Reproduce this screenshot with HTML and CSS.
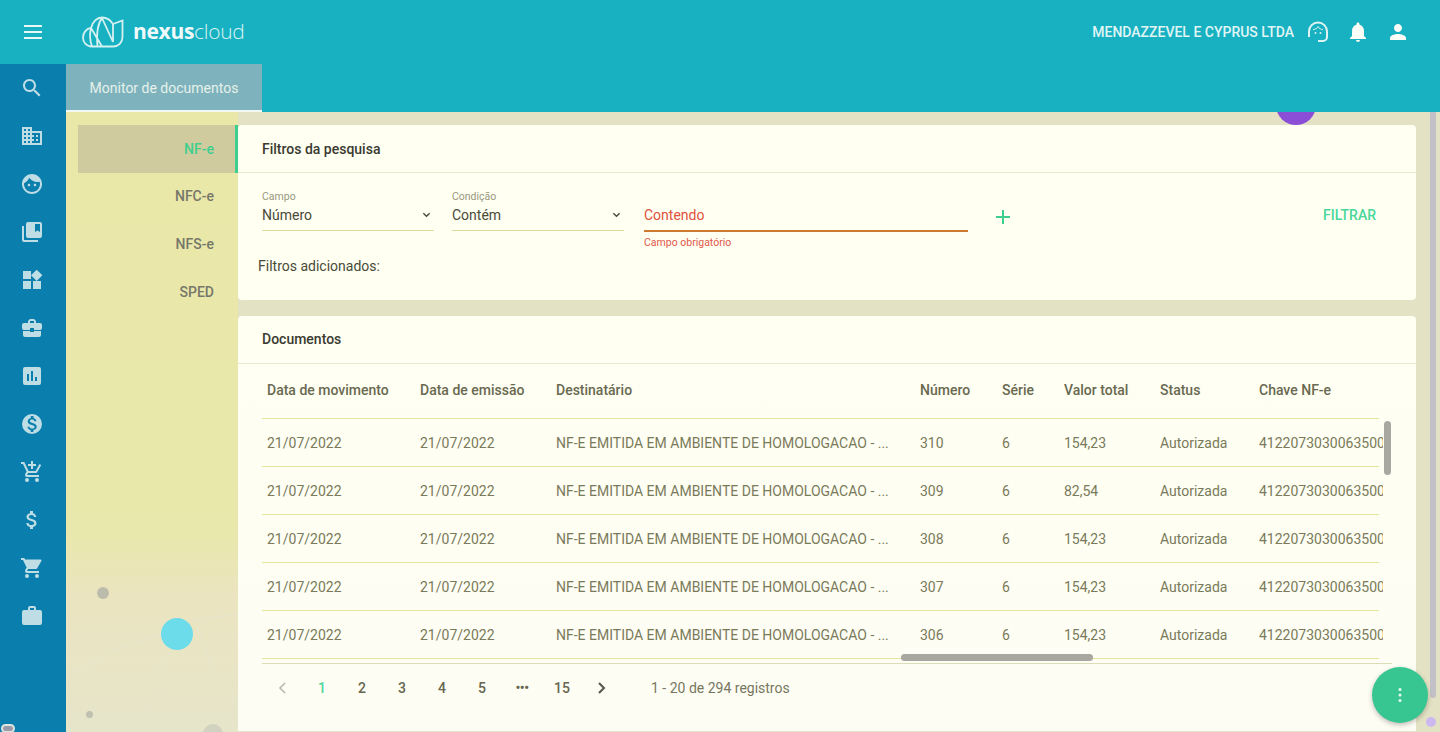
FILE: index.html
```html
<!DOCTYPE html>
<html lang="pt-BR">
<head>
<meta charset="utf-8">
<title>nexuscloud - Monitor de documentos</title>
<link rel="stylesheet" href="styles.css">
</head>
<body>
<div class="app">
  <header class="topbar">
    <button class="menu-btn" aria-label="Menu">
      <svg class="ic-menu" viewBox="0 0 18 14"><path d="M0 1h18M0 7h18M0 13h18" stroke="currentColor" stroke-width="2"/></svg>
    </button>
    <div class="logo">
      <svg class="logo-mark" viewBox="0 0 42 32" fill="none" stroke="currentColor" stroke-width="1.800"><path d="M10 30.500C4 30.500 1 26 1 21.500C1 16.500 4.500 12.500 9 12C10.500 5.500 15 1.500 20 1.500C25 1.500 28.500 4 31 8L40.500 4.500V21C40.500 26.500 36.500 30.500 31 30.500Z"/><path d="M9 12C7.500 18 8 25 10 30.500M9 12L20 30.500M20 2C15.500 8 14.500 20 15.500 30.500M20 2L31 26M31 8V26"/></svg>
      <span class="logo-text"><b>nexus</b>cloud</span>
    </div>
    <div class="top-right">
      <span class="company">MENDAZZEVEL E CYPRUS LTDA</span>
      <svg class="top-ic" viewBox="0 0 24 24" fill="none" stroke="currentColor" stroke-width="2"><path d="M3 17v-5.500a9 9 0 0 1 18 0V17a4 4 0 0 1-4 4h-5"/><circle cx="9.500" cy="13" r="1" fill="currentColor" stroke="none"/><circle cx="14.500" cy="13" r="1" fill="currentColor" stroke="none"/><path d="M7 9.500c2.500 0 4-1 5-3 1 2 3 3 5 3" stroke-width="1"/></svg>
      <svg class="top-ic bright" viewBox="0 0 24 24"><path fill="currentColor" d="M12 22c1.100 0 2-.9 2-2h-4c0 1.100.9 2 2 2zm6-6v-5c0-3.100-1.600-5.600-4.500-6.300V4c0-.8-.7-1.500-1.500-1.500s-1.500.7-1.500 1.500v.7C7.600 5.400 6 7.900 6 11v5l-2 2v1h16v-1l-2-2z"/></svg>
      <svg class="top-ic bright" viewBox="0 0 24 24"><path fill="currentColor" d="M12 12c2.200 0 4-1.800 4-4s-1.800-4-4-4-4 1.800-4 4 1.800 4 4 4zm0 2c-2.700 0-8 1.300-8 4v2h16v-2c0-2.700-5.300-4-8-4z"/></svg>
    </div>
  </header>

  <div class="body-row">
    <nav class="rail">
      <svg viewBox="0 0 24 24"><path fill="currentColor" d="M15.500 14h-.79l-.28-.27C15.410 12.590 16 11.110 16 9.500 16 5.910 13.090 3 9.500 3S3 5.910 3 9.500 5.910 16 9.500 16c1.610 0 3.090-.59 4.230-1.570l.27.28v.79l5 4.990L20.490 19l-4.990-5zm-6 0C7.010 14 5 11.990 5 9.500S7.010 5 9.500 5 14 7.010 14 9.500 11.990 14 9.500 14z"/></svg>
      <svg viewBox="0 0 24 24"><path fill="currentColor" d="M12 7V3H2v18h20V7H12zM6 19H4v-2h2v2zm0-4H4v-2h2v2zm0-4H4V9h2v2zm0-4H4V5h2v2zm4 12H8v-2h2v2zm0-4H8v-2h2v2zm0-4H8V9h2v2zm0-4H8V5h2v2zm10 12h-8v-2h2v-2h-2v-2h2v-2h-2V9h8v10zm-2-8h-2v2h2v-2zm0 4h-2v2h2v-2z"/></svg>
      <svg viewBox="0 0 24 24"><path fill="currentColor" d="M9 11.750c-.69 0-1.250.56-1.250 1.250s.56 1.250 1.250 1.250 1.250-.56 1.250-1.250-.56-1.250-1.250-1.250zm6 0c-.69 0-1.250.56-1.250 1.250s.56 1.250 1.250 1.250 1.250-.56 1.250-1.250-.56-1.250-1.250-1.250zM12 2C6.480 2 2 6.480 2 12s4.480 10 10 10 10-4.480 10-10S17.520 2 12 2zm0 18c-4.410 0-8-3.590-8-8 0-.29.02-.58.05-.86 2.360-1.050 4.230-2.980 5.210-5.370C11.070 8.330 14.050 10 17.420 10c.78 0 1.530-.09 2.250-.26.21.71.33 1.470.33 2.260 0 4.410-3.590 8-8 8z"/></svg>
      <svg viewBox="0 0 24 24"><path fill="currentColor" d="M4 6H2v14a2 2 0 0 0 2 2h14v-2H4V6zm16-4H8a2 2 0 0 0-2 2v12a2 2 0 0 0 2 2h12a2 2 0 0 0 2-2V4a2 2 0 0 0-2-2zm0 10-2.500-1.500L15 12V4h5v8z"/></svg>
      <svg viewBox="0 0 24 24"><path fill="currentColor" d="M13 13v8h8v-8h-8zM3 21h8v-8H3v8zM3 3v8h8V3H3zm13.700-1.300L11 7.300l5.700 5.700 5.700-5.700-5.700-5.600z"/></svg>
      <svg viewBox="0 0 24 24"><path fill="currentColor" d="M10 16v-1H3v4a2 2 0 0 0 2 2h14a2 2 0 0 0 2-2v-4h-7v1h-4zm10-9h-4V5l-2-2h-4L8 5v2H4a2 2 0 0 0-2 2v3a2 2 0 0 0 2 2h6v-2h4v2h6a2 2 0 0 0 2-2V9a2 2 0 0 0-2-2zm-6 0h-4V5h4v2z"/></svg>
      <svg viewBox="0 0 24 24"><path fill="currentColor" d="M19 3H5a2 2 0 0 0-2 2v14a2 2 0 0 0 2 2h14a2 2 0 0 0 2-2V5a2 2 0 0 0-2-2zM9 17H7v-7h2v7zm4 0h-2V7h2v10zm4 0h-2v-4h2v4z"/></svg>
      <svg viewBox="0 0 24 24"><path fill="currentColor" d="M12 2a10 10 0 1 0 0 20 10 10 0 0 0 0-20zm1.400 16.100V20h-2.700v-1.900c-1.700-.4-3.100-1.500-3.200-3.400h2c.1 1.100.8 1.900 2.700 1.900 2 0 2.400-1 2.400-1.600 0-.8-.4-1.600-2.700-2.100-2.500-.6-4.200-1.600-4.200-3.700 0-1.700 1.400-2.900 3.100-3.300V4h2.700v1.900c1.900.5 2.800 1.900 2.900 3.400h-2c-.1-1.100-.7-1.900-2.200-1.900-1.500 0-2.400.7-2.400 1.600 0 .8.600 1.400 2.700 1.900 2.100.6 4.200 1.400 4.200 3.900 0 1.800-1.300 2.800-3.100 3.300z"/></svg>
      <svg viewBox="0 0 24 24"><path fill="currentColor" d="M11 9h2V6h3V4h-3V1h-2v3H8v2h3v3zm-4 9a2 2 0 1 0 0 4 2 2 0 0 0 0-4zm10 0a2 2 0 1 0 0 4 2 2 0 0 0 0-4zM7.200 14.800v-.1l.9-1.700h7.500c.7 0 1.400-.4 1.700-1l3.900-7-1.700-1-3.900 7h-7L4.300 2H1v2h2l3.600 7.600-1.400 2.400c-.7 1.400.3 3 1.800 3h12v-2H7.400a.3.300 0 0 1-.2-.2z"/></svg>
      <svg viewBox="0 0 24 24"><path fill="currentColor" d="M11.800 10.900c-2.300-.6-3-1.200-3-2.100 0-1.100 1-1.900 2.700-1.900 1.800 0 2.400.8 2.500 2.100h2.200c-.1-1.700-1.200-3.300-3.200-3.800V3h-3v2.200c-1.900.4-3.500 1.700-3.500 3.600 0 2.300 1.900 3.400 4.700 4.100 2.500.6 3 1.500 3 2.400 0 .7-.5 1.800-2.700 1.800-2.100 0-2.900-.9-3-2.100H6.300c.1 2.200 1.800 3.500 3.700 3.900V21h3v-2.100c1.900-.4 3.500-1.500 3.500-3.600 0-2.800-2.400-3.800-4.700-4.400z"/></svg>
      <svg viewBox="0 0 24 24"><path fill="currentColor" d="M7 18a2 2 0 1 0 0 4 2 2 0 0 0 0-4zM1 2v2h2l3.600 7.600L5.200 14c-.7 1.300.3 3 1.800 3h12v-2H7.400a.3.300 0 0 1-.2-.2v-.1l.9-1.700h7.500c.7 0 1.400-.4 1.700-1L21.400 5c.4-.7-.1-1.500-.9-1.500H5.200L4.300 2H1zm16 16a2 2 0 1 0 0 4 2 2 0 0 0 0-4z"/></svg>
      <svg viewBox="0 0 24 24"><path fill="currentColor" d="M20 6h-4V4a2 2 0 0 0-2-2h-4a2 2 0 0 0-2 2v2H4a2 2 0 0 0-2 2v11a2 2 0 0 0 2 2h16a2 2 0 0 0 2-2V8a2 2 0 0 0-2-2zm-6 0h-4V4h4v2z"/></svg>
      <span class="rail-pill"></span>
    </nav>

    <div class="workspace">
      <div class="tabbar">
        <div class="tab">Monitor de documentos</div>
      </div>

      <main class="content">
        <svg class="net" viewBox="0 0 172 620" fill="none" stroke="#e8e6cf" stroke-width="1"><path d="M0 564 45 540 95 522M172 502 128 508M90 560 112 530M132 518 148 560M60 620 100 575"/></svg>
        <span class="blob blob-purple"></span>
        <span class="blob blob-cyan"></span>
        <span class="blob blob-grey"></span>
        <span class="blob blob-small"></span>
        <span class="blob blob-bottom"></span>
        <span class="blob blob-lilac"></span>
        <span class="page-scroll"></span>
        <aside class="sidenav">
          <a class="sidenav-item active">NF-e</a>
          <a class="sidenav-item">NFC-e</a>
          <a class="sidenav-item">NFS-e</a>
          <a class="sidenav-item">SPED</a>
        </aside>

        <div class="panels">
          <section class="card filters">
            <h2 class="card-title">Filtros da pesquisa</h2>
            <div class="filter-form">
              <div class="form-row">
                <label class="field field-select">
                  <span class="field-label">Campo</span>
                  <span class="field-value">Número<svg class="caret" viewBox="0 0 10 6"><path d="M1.500 1 5 4.500 8.500 1" fill="none" stroke="currentColor" stroke-width="1.500"/></svg></span>
                </label>
                <label class="field field-select">
                  <span class="field-label">Condição</span>
                  <span class="field-value">Contém<svg class="caret" viewBox="0 0 10 6"><path d="M1.500 1 5 4.500 8.500 1" fill="none" stroke="currentColor" stroke-width="1.500"/></svg></span>
                </label>
                <div class="field-text">
                  <span class="text-value">Contendo</span>
                  <span class="text-error">Campo obrigatório</span>
                </div>
                <svg class="add-ic" viewBox="0 0 14 14"><path d="M7 0v14M0 7h14" stroke="currentColor" stroke-width="2"/></svg>
                <button class="filter-btn">FILTRAR</button>
              </div>
              <p class="added">Filtros adicionados:</p>
            </div>
          </section>

          <section class="card docs">
            <h2 class="card-title">Documentos</h2>
            <div class="table-wrap">
              <div class="trow thead">
                <span>Data de movimento</span><span>Data de emissão</span><span>Destinatário</span><span>Número</span><span>Série</span><span>Valor total</span><span>Status</span><span>Chave NF-e</span>
              </div>
              <div class="trow">
                <span>21/07/2022</span><span>21/07/2022</span><span>NF-E EMITIDA EM AMBIENTE DE HOMOLOGACAO - ...</span><span>310</span><span>6</span><span>154,23</span><span>Autorizada</span><span class="key">41220730300635000</span>
              </div>
              <div class="trow">
                <span>21/07/2022</span><span>21/07/2022</span><span>NF-E EMITIDA EM AMBIENTE DE HOMOLOGACAO - ...</span><span>309</span><span>6</span><span>82,54</span><span>Autorizada</span><span class="key">41220730300635000</span>
              </div>
              <div class="trow">
                <span>21/07/2022</span><span>21/07/2022</span><span>NF-E EMITIDA EM AMBIENTE DE HOMOLOGACAO - ...</span><span>308</span><span>6</span><span>154,23</span><span>Autorizada</span><span class="key">41220730300635000</span>
              </div>
              <div class="trow">
                <span>21/07/2022</span><span>21/07/2022</span><span>NF-E EMITIDA EM AMBIENTE DE HOMOLOGACAO - ...</span><span>307</span><span>6</span><span>154,23</span><span>Autorizada</span><span class="key">41220730300635000</span>
              </div>
              <div class="trow">
                <span>21/07/2022</span><span>21/07/2022</span><span>NF-E EMITIDA EM AMBIENTE DE HOMOLOGACAO - ...</span><span>306</span><span>6</span><span>154,23</span><span>Autorizada</span><span class="key">41220730300635000</span>
              </div>
              <span class="vscroll"></span>
              <span class="hscroll"></span>
            </div>
            <div class="pager">
              <svg class="chev dim" viewBox="0 0 8 12"><path d="M6.500 1 1.500 6l5 5" fill="none" stroke="currentColor" stroke-width="1.500"/></svg>
              <span class="page current">1</span>
              <span class="page">2</span>
              <span class="page">3</span>
              <span class="page">4</span>
              <span class="page">5</span>
              <span class="page dots">•••</span>
              <span class="page">15</span>
              <svg class="chev" viewBox="0 0 8 12"><path d="M1.500 1l5 5-5 5" fill="none" stroke="currentColor" stroke-width="2"/></svg>
              <span class="total">1 - 20 de 294 registros</span>
            </div>
          </section>
        </div>
        <button class="fab" aria-label="Mais opções">
          <svg viewBox="0 0 4 16"><circle cx="2" cy="2.500" r="1.500"/><circle cx="2" cy="8" r="1.500"/><circle cx="2" cy="13.500" r="1.500"/></svg>
        </button>
      </main>
    </div>
  </div>
</div>
</body>
</html>
```

FILE: styles.css
```css
* { box-sizing: border-box; }
html, body { margin: 0; height: 100%; overflow: hidden; }
body {
  font-family: Roboto, "Liberation Sans", sans-serif;
  font-size: 14px;
  color: #66664f;
}
.app { display: flex; flex-direction: column; height: 732px; width: 1440px; }

.topbar {
  height: 64px;
  flex: none;
  background: #18b1c2;
  display: flex;
  align-items: center;
  color: #e3f6f4;
}
.menu-btn {
  width: 66px; height: 64px; flex: none;
  border: 0; padding: 0 1px 0 0; background: none; color: #e8f7f5;
  display: flex; align-items: center; justify-content: center;
}
.ic-menu { width: 18px; height: 14px; }
.logo { display: flex; align-items: center; gap: 9px; margin-left: 16px; margin-top: -1px; }
.logo-mark { width: 42px; height: 32px; color: #d5f1f1; }
.logo-text { font-family: "Open Sans", sans-serif; font-size: 21px; letter-spacing: -0.300px; color: #d9f3f2; font-weight: 300; line-height: 1; }
.logo-text b { font-weight: 700; color: #f0fafa; }
.top-right { margin-left: auto; display: flex; align-items: center; padding-right: 30px; }
.company { font-size: 14px; font-weight: 500; color: #e0f5f4; margin-right: 12px; margin-top: -1px; }
.top-ic { width: 24px; height: 24px; color: #dff4f2; }
.top-ic.bright { color: #fbfdf7; margin-left: 16px; }

.body-row { flex: 1; display: flex; min-height: 0; }
.rail {
  width: 66px; flex: none;
  background: #0a7fae;
  color: #bedde4;
  display: flex; flex-direction: column; align-items: center;
  padding: 12px 2px 0 0;
  gap: 24px;
  position: relative;
}
.rail svg { width: 24px; height: 24px; flex: none; }
.rail-pill {
  position: absolute; left: 1px; bottom: -1px;
  width: 14px; height: 9px; border-radius: 5px;
  background: #99a;
  border: 2px solid #dfe6e0;
}

.workspace { flex: 1; min-width: 0; display: flex; flex-direction: column; }
.tabbar { height: 48px; flex: none; background: #18b1c2; display: flex; }
.tab {
  width: 196px; height: 48px;
  padding-top: 1px;
  background: #7eb3bd;
  border-bottom: 2px solid #f4f8f4;
  color: #e6f1ea;
  display: flex; align-items: center; justify-content: center;
  font-size: 14px;
}

.content {
  flex: 1; min-height: 0;
  background:
    linear-gradient(90deg, transparent 172px, #e3e2c4 172px),
    linear-gradient(180deg, #e9e8a8 0%, #e9e8ac 68%, #ebe4c0 78%, #e6e5ca 100%);
  display: flex;
  padding: 13px 24px 1px 12px;
  position: relative;
  overflow: hidden;
}
.net { position: absolute; left: 0; top: 0; width: 172px; height: 620px; }
.blob { position: absolute; border-radius: 50%; }
.blob-purple { left: 1210px; top: -27px; width: 40px; height: 40px; background: #8a4fd6; }
.blob-cyan { left: 95px; top: 506px; width: 32px; height: 32px; background: #6cdcea; }
.blob-grey { left: 31px; top: 475px; width: 12px; height: 12px; background: #bcbcac; }
.blob-small { left: 20px; top: 599px; width: 7px; height: 7px; background: #c0c0b0; }
.blob-bottom { left: 137px; top: 612px; width: 20px; height: 20px; background: #d2d2c0; }
.blob-lilac { right: 4px; top: 605px; width: 10px; height: 10px; background: #cdb8f0; }
.page-scroll { position: absolute; right: 4px; top: 0; width: 6px; height: 586px; border-radius: 0 0 3px 3px; background: #c4c0c8; }

.sidenav { width: 160px; flex: none; position: relative; }
.sidenav-item {
  display: flex; align-items: center; justify-content: flex-end;
  height: 48px;
  padding: 0 24px 2px 0;
  font-weight: 500;
  color: #77776a;
}
.sidenav-item.active {
  background: #cfcb9e;
  color: #3fcf8e;
  border-right: 3px solid #3ecf8e;
  padding: 0 21px 0 0;
}

.panels { flex: 1; min-width: 0; display: flex; flex-direction: column; gap: 16px; position: relative; }
.card { background: #fffff2; border-radius: 4px; }
.card-title {
  margin: 0; height: 48px;
  font-size: 14px; font-weight: 500; color: #3a3a30;
  display: flex; align-items: center;
  padding-left: 24px;
  border-bottom: 1px solid #e8e8cc;
}
.filters { height: 175px; flex: none; }
.filter-form { padding: 16px 24px 0 20px; }
.form-row { display: flex; align-items: flex-start; height: 72px; padding-left: 4px; }
.field { display: flex; flex-direction: column; width: 172px; margin-right: 18px; }
.field-label { font-size: 10.500px; line-height: 12px; color: #98987e; margin-top: 2px; }
.field-value {
  display: flex; align-items: center; justify-content: space-between;
  height: 30px; font-size: 14px; color: #4a4a38;
  border-bottom: 1px solid #dcdc9c;
  margin-top: -2px;
  padding: 0 3px 2px 0;
}
.caret { width: 9px; height: 6px; color: #4a4a38; }
.field-text { width: 324px; margin-left: 2px; margin-top: 11px; display: flex; flex-direction: column; }
.text-value { height: 32px; font-size: 14px; line-height: 30px; color: #e0503c; border-bottom: 2px solid #cc7a30; }
.text-error { font-size: 10.500px; color: #e2574a; margin-top: 5px; line-height: 12px; }
.add-ic { width: 14px; height: 14px; color: #3ecf8e; margin-left: 28px; margin-top: 21px; }
.filter-btn {
  margin-left: auto; margin-top: 18px; border: 0; background: none; padding: 0;
  font: 500 14px Roboto, sans-serif; color: #49d79b;
  margin-right: 16px;
}
.added { margin: -5px 0 0 0; font-size: 14px; color: #4a4a38; line-height: 20px; }

.docs { flex: 1; min-height: 0; border-radius: 4px 4px 0 0; background: linear-gradient(180deg, #fffff2 0%, #fdfdf4 100%); }
.docs .card-title { padding-bottom: 2px; }
.table-wrap { position: relative; margin: 0 24px; height: 300px; border-bottom: 1px solid #dcdcb8; overflow: hidden; }
.trow {
  display: grid;
  grid-template-columns: 153px 136px 364px 82px 62px 96px 99px 124px;
  height: 48px;
  align-items: center;
  border-bottom: 1px solid #e6e69a;
  padding-left: 5px;
  color: #7a7a5a;
  white-space: nowrap;
  width: 1117px;
}
.trow.thead { height: 55px; padding-bottom: 2px; font-weight: 500; color: #696950; }
.trow span { overflow: hidden; }
.vscroll { position: absolute; right: 1px; top: 57px; width: 7px; height: 54px; border-radius: 4px; background: #a8a8a0; }
.hscroll { position: absolute; left: 639px; bottom: 2px; width: 192px; height: 7px; border-radius: 4px; background: #a8a8a0; }
.pager { display: flex; align-items: center; height: 48px; padding-left: 40px; color: #66664f; font-weight: 500; }
.chev { width: 9px; height: 12px; color: #55554a; }
.chev.dim { color: #b4b4a8; }
.page { width: 40px; text-align: center; }
.page.current { color: #4fd6a0; margin-left: 15px; }
.page.dots { font-size: 14px; letter-spacing: -0.500px; }
.chev:not(.dim) { margin-left: 15px; }
.total { margin-left: 45px; font-weight: 400; color: #77775f; }

.fab {
  position: absolute; right: 12px; bottom: 9px;
  width: 56px; height: 56px; border-radius: 50%;
  border: 0; background: #37c692;
  display: flex; align-items: center; justify-content: center;
  box-shadow: 0 2px 5px rgba(0,0,0,.25);
}
.fab svg { width: 4px; height: 16px; fill: #e8fbf2; }
```
